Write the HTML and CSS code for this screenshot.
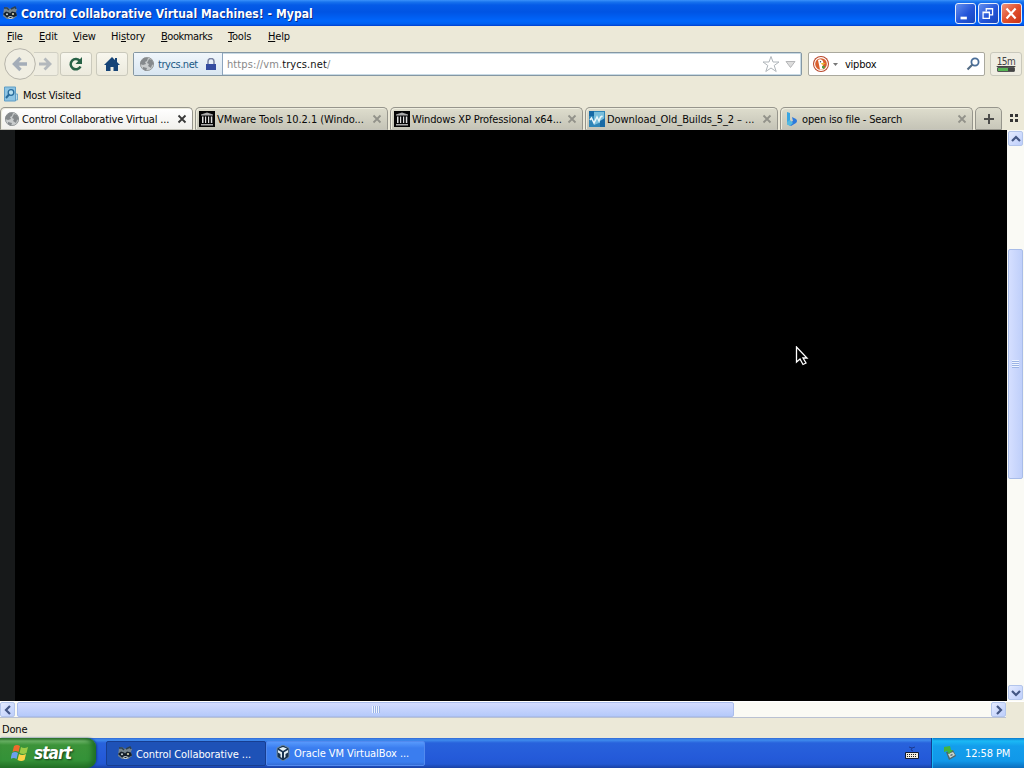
FILE: index.html
```html
<!DOCTYPE html>
<html lang="en">
<head>
<meta charset="utf-8">
<title>Control Collaborative Virtual Machines! - Mypal</title>
<link rel="stylesheet" href="styles.css">
</head>
<body>
<svg class="defs" width="0" height="0">
  <symbol id="globe" viewBox="0 0 16 16"><circle cx="8" cy="8" r="7" fill="#c9cccd"/><circle cx="8" cy="8" r="6.600" fill="none" stroke="#939799" stroke-width=".9"/><path d="M2 5l3-3 4 0-1 3-2 1 1 2-3 1-3-1zM10 3l3 1 2 4-2 1-1 3-3-2 1-2-2-1zM4 11l4 1-1 3-3-2z" fill="#85898c"/></symbol>
  <symbol id="raccoon" viewBox="0 0 16 16"><path d="M2 3l3-1 3 2 4-2 3 2-1 3 1 4-4 3H5l-4-3z" fill="#77858d"/><path d="M2 3l3 0 2 2M9 4l4-2 1 2" stroke="#2c4151" stroke-width="1.500" fill="none"/><path d="M1 9l3-2.500 3 1 1 1 2-2 4 1 1 3-3 1.500-3-1-1 0-3 1.500z" fill="#16202a"/><circle cx="5" cy="9.300" r="1" fill="#c9d5d8"/><circle cx="11" cy="9" r="1.100" fill="#dad6ae"/><path d="M6 12l2-1 3 1-1 2H7z" fill="#bdc6c9"/><path d="M7.500 12h2v1h-2z" fill="#15202d"/></symbol>
  <symbol id="archive" viewBox="0 0 16 16"><path fill="#050505" d="M0 0h16v16H0z"/><path d="M2 3.500L8 1.500l6 2v1H2zM2 13h12v1.500H2z" fill="#aaa"/><path d="M3 5.500h1.500V12H3zM6 5.500h1.200V12H6zM9 5.500h1.200V12H9zM11.800 5.500h1.500V12h-1.500z" fill="#ddd"/></symbol>
  <symbol id="close" viewBox="0 0 10 10"><path d="M1.500 1.500l7 7m0-7l-7 7" stroke="currentColor" stroke-width="1.800"/></symbol>
</svg>
<div class="screen">
  <header class="title">
    <svg class="i16"><use href="#raccoon"/></svg>
    <span class="title-text">Control Collaborative Virtual Machines! - Mypal</span>
    <div class="window-buttons">
      <span class="wb"><svg viewBox="0 0 21 21"><path d="M5 14h7v3H5z" fill="#fff"/></svg></span>
      <span class="wb"><svg viewBox="0 0 21 21"><path d="M8 8V5h7v7h-3M8 5.500h7M4.500 9h7v7h-7zM4 9.500h8" fill="none" stroke="#fff" stroke-width="1.400"/></svg></span>
      <span class="wb red"><svg viewBox="0 0 21 21"><path d="M5 5l10 11M15 5L5 16" stroke="#fff" stroke-width="2.400"/></svg></span>
    </div>
  </header>
  <nav class="menu"><span class="m1"><u>F</u>ile</span><span class="m2"><u>E</u>dit</span><span class="m3"><u>V</u>iew</span><span class="m4">Hi<u>s</u>tory</span><span class="m5"><u>B</u>ookmarks</span><span class="m6"><u>T</u>ools</span><span class="m7"><u>H</u>elp</span></nav>
  <div class="toolbar">
    <svg class="backforward" viewBox="0 0 56 34"><path d="M31 5.500h22q2 0 2 2v19q0 2-2 2H31" fill="#efede1" stroke="#d0cfc3"/><circle cx="17" cy="17" r="15.300" fill="#f0eee2" stroke="#b6b4aa"/><path d="M17.500 11l-6 6 6 6M13 17h11" fill="none" stroke="#a4adb8" stroke-width="3.400"/><path d="M41.500 11.500L47 17l-5.500 5.500M46 17H36" fill="none" stroke="#b3b8bc" stroke-width="2.800"/></svg>
    <div class="button reload"><svg class="i16" viewBox="0 0 16 16"><path d="M12.500 10.500A5.200 5.200 0 1 1 12 5" fill="none" stroke="#286146" stroke-width="2.500"/><path d="M14 1v7H7.500z" fill="#286146"/></svg></div>
    <div class="button home"><svg class="i16" viewBox="0 0 16 16"><path d="M8 1l3 3V2h2v4l3 3H14v6H9.500v-4h-3v4H2V9H0z" fill="#164477"/></svg></div>
    <div class="address">
      <div class="identity"><svg class="i16"><use href="#globe"/></svg><span class="domain">trycs.net</span><svg class="lock" viewBox="0 0 10 13"><path d="M2 6V3.500a3 3 0 0 1 6 0V6" fill="none" stroke="#7781a2" stroke-width="1.500"/><path d="M0 6h10v6H0z" fill="#344ca0"/></svg></div>
      <span class="url">https://vm.<b>trycs.net</b>/</span>
      <svg class="star" viewBox="0 0 18 18"><path d="M9 1.500l2 5.500h6l-4.800 3.500 2 6L9 13l-5.200 3.500 2-6L1 7h6z" fill="#fff" stroke="#afb5ba"/></svg>
      <svg class="drop" viewBox="0 0 11 9"><path d="M1 1.500h9L5.500 7.500z" fill="#ddd" stroke="#b5b6b8"/></svg>
    </div>
    <div class="search">
      <svg class="duck" viewBox="0 0 16 16"><circle cx="8" cy="8" r="8" fill="#b9472a"/><circle cx="8" cy="8" r="6.400" fill="#d95f2d" stroke="#fff" stroke-width="1.100"/><path d="M5 4q3-2 5 1l.5 3-1 2 1 3.500H7z" fill="#fff"/><path d="M8 7h5l-4 2z" fill="#edba2d"/><path d="M9 10h3l-1 3-2-1z" fill="#529f45"/><circle cx="7.500" cy="5.800" r=".7" fill="#345"/></svg>
      <svg class="tiny" viewBox="0 0 5 3"><path d="M0 0h5L2.500 3z" fill="#777"/></svg><span class="query">vipbox</span>
      <svg class="magnify" viewBox="0 0 14 14"><circle cx="9" cy="5" r="3.600" fill="none" stroke="#4a6e98" stroke-width="1.800"/><path d="M6.500 7.500L1.500 12.500" stroke="#526b85" stroke-width="2.200"/></svg>
    </div>
    <div class="session"><span>15m</span><i></i></div>
  </div>
  <div class="bookmarks"><svg class="i16" viewBox="0 0 16 16"><path d="M1.500 1h11v14h-11z" fill="#8dc4e3" stroke="#5e9dc5"/><path d="M13 8h1.500v6H13" fill="#b7d9e9" stroke="#71a8c8"/><circle cx="8" cy="6.500" r="2.800" fill="#b6dff0" stroke="#286b9b" stroke-width="1.300"/><path d="M6 8.500L3 12" stroke="#286b9b" stroke-width="2"/></svg><span class="visited">Most Visited</span></div>
  <div class="tabs">
    <div class="tab active"><svg class="i16"><use href="#globe"/></svg><span class="t1">Control Collaborative Virtual ...</span><svg class="x"><use href="#close"/></svg></div>
    <div class="tab"><svg class="i16"><use href="#archive"/></svg><span class="t2">VMware Tools 10.2.1 (Windo...</span><svg class="x"><use href="#close"/></svg></div>
    <div class="tab"><svg class="i16"><use href="#archive"/></svg><span class="t3">Windows XP Professional x64...</span><svg class="x"><use href="#close"/></svg></div>
    <div class="tab"><svg class="i16" viewBox="0 0 16 16"><path d="M0 0h16v16H0z" fill="#2f86b8"/><path d="M5 1h10v9L5 14z" fill="#79bedb"/><path d="M1 9l1.500-2L5 12l3-6 2 4 1.500-4 2-1" fill="none" stroke="#e9f6fa" stroke-width="1.500"/><path d="M0 0h5v5H0zM11 10l5-3v9h-5z" fill="#1769a5"/></svg><span class="t4">Download_Old_Builds_5_2 – ...</span><svg class="x"><use href="#close"/></svg></div>
    <div class="tab"><svg class="i16" viewBox="0 0 16 16"><path d="M3 1l3 1v8l-3 3z" fill="#39a6e2"/><path d="M8 6l4 2q2 2 0 4l-5 3-4-2 6-3z" fill="#2d79dc"/><path d="M3 11l3-2 3 3-3 3-3-1.500z" fill="#54b9df"/></svg><span class="t5">open iso file - Search</span><svg class="x"><use href="#close"/></svg></div>
    <div class="newtab"><svg viewBox="0 0 10 10"><path d="M5 0v10M0 5h10" stroke="#4d4d4b" stroke-width="2"/></svg></div>
    <svg class="grid" viewBox="0 0 9 8"><path d="M0 0h3v3H0zM5 0h3v3H5zM0 5h3v3H0zM5 5h3v3H5z" fill="#353535"/></svg>
  </div>
  <main class="viewport">
    <div class="canvas"><svg class="cursor" viewBox="0 0 14 20"><path d="M1.500 1v15l3.500-3 3 5.500 3-1.500-3-5h4z" fill="#000" stroke="#fff" stroke-width="1.300"/></svg></div>
    <div class="vscroll"><span class="arrow"><svg viewBox="0 0 10 10"><path d="M1 7l4-4 4 4" /></svg></span><div class="vtrack"><div class="vthumb"><i></i></div></div><span class="arrow"><svg viewBox="0 0 10 10"><path d="M1 3l4 4 4-4" /></svg></span></div>
  </main>
  <div class="hscroll"><span class="arrow"><svg viewBox="0 0 10 10"><path d="M7 1L3 5l4 4"/></svg></span><div class="hthumb"><i></i></div><div class="htrack"></div><span class="arrow"><svg viewBox="0 0 10 10"><path d="M3 1l4 4-4 4"/></svg></span><b></b></div>
  <div class="status"><span>Done</span></div>
  <footer class="taskbar">
    <div class="start"><svg viewBox="0 0 18 18"><path d="M3 2q3-2 6 0L7.500 8q-3-2-6 0z" fill="#ef6a2c"/><path d="M10 3q3 2 7 0l-1.500 6q-3 2-7 0z" fill="#9bcb46"/><path d="M1 9q3-2 6 0l-1.500 6q-3-2-6 0z" fill="#6ca0ee"/><path d="M8 10q3 2 7 0l-1.500 6q-3 2-7 0z" fill="#fbd247"/></svg><span>start</span></div>
    <div class="task pressed"><svg class="i16"><use href="#raccoon"/></svg><span class="k1">Control Collaborative ...</span></div>
    <div class="task"><svg class="i16" viewBox="0 0 16 16"><path d="M8 0l6 3v9l-6 4-6-4V3z" fill="#18334f" stroke="#6d8ca8"/><path d="M4 3.500l4-1.500 4 1.500L8 6zM3 5l4 2.300V13l-1.500-1V9L3 7.500zM13 5L9 7.300V13l1.500-1V9L13 7.500z" fill="#e3f0f5"/></svg><span class="k2">Oracle VM VirtualBox ...</span></div>
    <svg class="keyboard" viewBox="0 0 14 14"><path d="M4 1l3 1 3-1M7 2l-1 2 2 1" fill="none" stroke="#1b3b91"/><path d="M.5 6.500h13v6H.5z" fill="#f4eede" stroke="#101a33"/><path d="M2 8.500h10M2 10.500h10" stroke="#222" stroke-dasharray="1 1"/></svg>
    <div class="tray"><svg class="i16" viewBox="0 0 16 16"><path d="M4 7l7-2 3 6-7 4z" fill="#526769"/><path d="M6 9l5-2 2 3-5 3z" fill="#c7d5ce"/><path d="M8 10l2-1 1 1-2 1z" fill="#536974"/><path d="M2 2l6-1 1 4h2l-4 4-2-3-3 1z" fill="#43b43a"/></svg><span class="clock">12:58 PM</span></div>
  </footer>
</div>
</body>
</html>
```
FILE: styles.css
```css
*{box-sizing:border-box}
body{margin:0;overflow:hidden;font:11px/14px "DejaVu Sans Condensed","DejaVu Sans",sans-serif;font-stretch:condensed;color:#080808;background:#ece9d8}
svg{display:block;flex:none}
.defs{position:absolute}
.screen{width:1024px;height:768px;display:flex;flex-direction:column}
.screen span{white-space:nowrap}
.i16{width:16px;height:16px;flex:none}
.title{height:26px;display:flex;align-items:center;padding:0 2px;gap:3px;background:linear-gradient(#3b92fb 0,#1873ee 2px,#055be7 5px,#0054e4 12px,#0066fc 21px,#0060f0 24px,#003dce);color:#fff}
.title-text{padding-top:1px;font:bold 12px/16px "DejaVu Sans Condensed","DejaVu Sans",sans-serif;font-stretch:condensed;letter-spacing:.07px;text-shadow:1px 1px #0a2b87}
.window-buttons{display:flex;gap:2px;margin-left:auto}
.wb{width:21px;height:21px;border:1px solid #e6eefb;border-radius:3px;background:linear-gradient(135deg,#648fee,#2455d9 55%,#1746bd)}
.wb svg{width:19px;height:19px}
.red{background:linear-gradient(135deg,#ee947c,#e1502d 50%,#c93215)}
.menu{height:20px;display:flex;padding:4px 0 0 7px}
.menu u{text-decoration-thickness:1px;text-underline-offset:1px}
.m1{width:32px}.m2{width:34px}.m3{width:38px}.m4{width:50px}.m5{width:67px}.m6{width:40px}
.m1,.m2,.m3,.m6,.m7{letter-spacing:-.2px}
.m4{letter-spacing:-.13px}.m5{letter-spacing:-.45px}
.toolbar{height:38px;display:flex;align-items:center;padding:0 2px 2px 3px}
.backforward{width:56px;height:34px}
.button{display:flex;align-items:center;justify-content:center;width:32px;height:24px;border:1px solid #cac9bc;border-radius:3px;background:linear-gradient(#f8f7ee,#eceadd)}
.reload{margin-left:1px}.home{margin-left:4px}
.address{width:669px;height:24px;margin-left:5px;display:flex;align-items:center;border:1px solid #8597a3;border-radius:2px;background:#fff;box-shadow:inset 0 0 0 1px #c8dae5}
.identity{width:89px;height:22px;display:flex;align-items:center;padding-left:5px;gap:3px;background:linear-gradient(#f0f6fb,#d9e6f1);border-right:1px solid #8ca4bc;color:#215985}
.domain{width:45px;padding-top:2px;letter-spacing:-.45px}
.lock{width:10px;height:13px}
.url{margin-left:4px;padding-top:2px;letter-spacing:.1px;color:#888}.url b{font-weight:400;color:#111}
.star{width:18px;height:18px;margin-left:auto}
.drop{width:11px;height:9px;margin:0 5px 0 5px}
.search{width:177px;height:24px;margin-left:6px;display:flex;align-items:center;padding:0 4px;background:#fff;border:1px solid #aaa99e;border-radius:2px}
.duck{width:16px;height:16px}.tiny{width:5px;height:3px;margin-left:4px}.query{margin-left:7px;padding-top:2px;letter-spacing:-.25px}
.magnify{width:14px;height:14px;margin-left:auto}
.session{width:32px;height:24px;margin-left:5px;display:flex;flex-direction:column;align-items:center;padding-top:3px;border:1px solid #c9c8bc;border-radius:3px;background:#efede2;font-size:10px;line-height:11px;color:#444}
.session span{letter-spacing:-.5px;text-decoration:underline;text-underline-offset:1px;text-decoration-thickness:1px}
.session i{width:18px;height:5px;border:1px solid #555;border-radius:1px;background:linear-gradient(90deg,#55b454 60%,#444 60%)}
.bookmarks{height:22px;display:flex;align-items:center;padding:0 0 2px 3px;gap:4px}
.visited{padding-top:3px;letter-spacing:-.2px}
.tabs{height:24px;display:flex;gap:2px;align-items:end}
.tab{width:193px;height:23px;display:flex;align-items:center;gap:2px;padding:1px 5px 0 3px;border:1px solid #96958c;border-bottom-color:#c5c4bb;border-radius:5px 5px 0 0;background:linear-gradient(#deddcd,#c5c4b7);box-shadow:inset 1px 1px #eeedde}
.tab span{padding-top:1px}
.active{background:linear-gradient(#fff,#f1f0ec)}
.t1{letter-spacing:-.16px}.t2{letter-spacing:-.06px}.t3{letter-spacing:-.13px}.t4{letter-spacing:-.06px}.t5{letter-spacing:-.17px}
.x{width:10px;height:10px;margin-left:auto;color:#92928a}.active .x{color:#393939}
.newtab{width:27px;height:23px;border:1px solid #96958c;border-radius:5px 5px 0 0;background:linear-gradient(#deddcd,#c8c7ba);display:flex;align-items:center;justify-content:center}
.newtab svg{width:10px;height:10px}.grid{width:9px;height:8px;margin:0 0 8px 6px}
.viewport{height:571px;display:flex}
.canvas{width:1007px;background:#000;border-left:15px solid #17191a}
.cursor{width:14px;height:20px;margin:216px 0 0 780px}
.vscroll{width:17px;display:flex;flex-direction:column;background:#fafaf5;padding:1px}
.arrow{display:flex;align-items:center;justify-content:center;width:15px;height:15px;border:1px solid #b3c5eb;border-radius:2px;background:linear-gradient(135deg,#e4ebff,#bdcefb)}
.arrow svg{width:10px;height:10px}.arrow path{fill:none;stroke:#435684;stroke-width:2.2}
.vtrack{flex:1;padding-top:103px}
.vthumb{width:15px;height:230px;display:flex;align-items:center;justify-content:center;border:1px solid #a8bce8;border-radius:2px;background:linear-gradient(90deg,#d5dfff,#bfcffa)}
.vthumb i{width:7px;height:8px;background:repeating-linear-gradient(#eef4ff 0 1px,#9bb3e5 1px 2px)}
.hscroll{height:17px;display:flex;align-items:center;background:#fafaf4;border-top:1px solid #fff;border-bottom:1px solid #b9c1d2}
.hthumb{width:717px;height:15px;margin-left:2px;display:flex;align-items:center;justify-content:center;border:1px solid #aabdec;border-radius:2px;background:linear-gradient(#d3dcff,#b5c9fa)}
.hthumb i{width:8px;height:7px;background:repeating-linear-gradient(90deg,#eef4ff 0 1px,#9bb3e5 1px 2px)}
.htrack{width:257px}.hscroll b{width:18px;height:16px;background:#ece9d8}
.status{height:20px;padding:5px 2px}
.status span{letter-spacing:-.15px}
.taskbar{height:30px;display:flex;align-items:center;color:#fff;background:linear-gradient(#3169d6 0,#3f8ced 2px,#2862dc 5px,#245ad9 20px,#2258d2 26px,#1941a4)}
.start{width:96px;height:30px;display:flex;align-items:center;padding-left:11px;gap:5px;border-radius:0 9px 9px 0;background:linear-gradient(#326f2c 0,#6cb467 3px,#3b9339 7px,#349238 22px,#247126);box-shadow:inset -4px 0 5px #1f6f25,1px 0 2px #123f8f;font:italic bold 17px/22px "DejaVu Sans Condensed","DejaVu Sans",sans-serif;text-shadow:1px 1px 2px #143916}
.start svg{width:18px;height:18px}.start span{letter-spacing:-.9px}
.task{width:159px;height:25px;display:flex;align-items:center;gap:3px;padding-left:8px;border:1px solid #528aef;border-radius:2px;background:linear-gradient(#5799fc,#3a7def 6px,#3a7def 20px,#326cd6)}
.task span{padding-top:1px;letter-spacing:-.08px}
.pressed{width:160px;margin-left:10px;padding-left:10px;border-color:#173e91;background:#1e52b7}
.pressed span{padding-top:3px}
.keyboard{width:14px;height:14px;margin-left:480px}
.tray{width:93px;height:30px;margin-left:auto;display:flex;align-items:center;gap:7px;padding-left:10px;border-left:1px solid #123f91;background:linear-gradient(#0b79cd 0,#1bb9f5 3px,#139eec 8px,#1198e9 23px,#0b6dbd);box-shadow:inset 1px 0 #18b9f7}
.clock{padding-top:1px;letter-spacing:-.12px}
```
